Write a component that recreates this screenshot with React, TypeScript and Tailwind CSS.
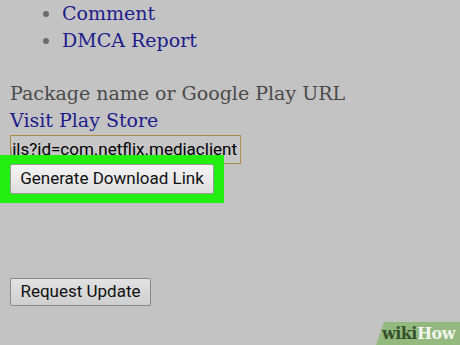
export default function App() {
  const serif = { fontFamily: '"DejaVu Serif", serif' };
  return (
    <div className="w-[460px] h-[345px] bg-[#c3c3c3] overflow-hidden relative" style={serif}>
      {/* Links list */}
      <ul className="list-disc pl-[62px] text-[19px] leading-[27px] text-[#1c1c8a] marker:text-[#6a6a6a]">
        <li>Comment</li>
        <li>DMCA Report</li>
      </ul>

      <div className="pl-[10px] mt-[26px]">
        <p className="text-[19px] leading-[27px] text-[#4a4a4a]">Package name or Google Play URL</p>
        <p className="text-[19px] leading-[27px] text-[#1c1c8a]">Visit Play Store</p>

        {/* URL field */}
        <div
          className="mt-[1px] w-[231px] h-[29px] border border-[#b08a48] bg-[#c6c6c6] flex items-center justify-end overflow-hidden whitespace-nowrap text-[17px] text-black pr-[2px]"
          style={{ fontFamily: 'Roboto, sans-serif' }}
        >
          <span>https://play.google.com/store/apps/details?id=com.netflix.mediaclient</span>
          <span className="inline-block w-[1.5px] h-[20px] bg-black ml-[1px]" />
        </div>
      </div>

      {/* Highlighted button */}
      <div className="-mt-[9px] w-[224px] h-[48px] bg-[#22ee10] pl-[10px] pt-[9px] relative">
        <button
          className="w-[204px] h-[30px] border border-[#9a9a9a] rounded-[2px] bg-gradient-to-b from-[#f4f4f4] to-[#dedede] text-[17px] text-[#111]"
          style={{ fontFamily: 'Roboto, sans-serif' }}
        >
          Generate Download Link
        </button>
      </div>

      <div className="pl-[10px] mt-[75px]">
        <button
          className="w-[141px] h-[28px] border border-[#8a8a8a] rounded-[2px] bg-gradient-to-b from-[#e2e2e2] to-[#cfcfcf] text-[17px] text-[#111]"
          style={{ fontFamily: 'Roboto, sans-serif' }}
        >
          Request Update
        </button>
      </div>

      {/* wikiHow watermark */}
      <div className="absolute right-0 bottom-0 w-[84px] h-[23px] bg-[#93b97e] [clip-path:polygon(8px_0,100%_0,100%_100%,0_100%)] flex items-end justify-end pr-[5px] pb-[3px]">
        <span className="text-[16px] font-bold leading-none tracking-[-0.5px]" style={{ fontFamily: '"DejaVu Serif", serif' }}>
          <span className="text-[#35502a]">wiki</span>
          <span className="text-[#f2f6ee]">How</span>
        </span>
      </div>
    </div>
  );
}
